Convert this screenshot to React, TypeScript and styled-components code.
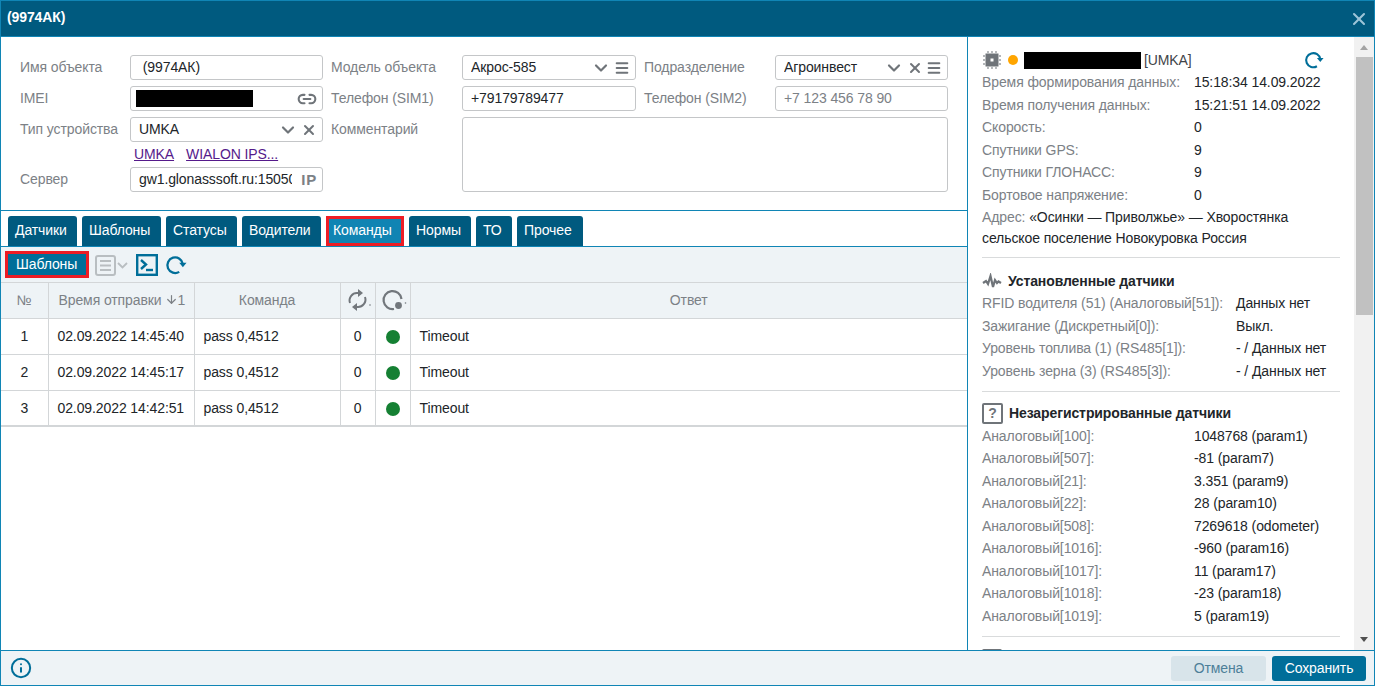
import React from 'react'
import styled, {createGlobalStyle} from 'styled-components'
import {ArrowDown, ChevronDown, Info, Link2, Menu, X} from 'lucide-react'

const GlobalStyle = createGlobalStyle`
  html, body {
    margin: 0;
    height: 687px;
    overflow: hidden;
    background: #fff;
    font-family: "Liberation Sans", Arial, sans-serif;
    font-size: 14px;
    letter-spacing: -0.1px;
    color: #212529;
  }
`

const Modal = styled.div`
  box-sizing: border-box;
  height: 686px;
  display: flex;
  flex-direction: column;
  border: 1px solid #1085b5;
`

const Header = styled.div`
  flex: none;
  height: 35px;
  display: flex;
  align-items: center;
  justify-content: space-between;
  padding: 0 5px 0 6px;
  background: #005a7f;
  border-bottom: 1px solid #1085b5;
  color: #fff;
  font-weight: bold;

  svg {
    color: #9cc4d8;
  }
`

const Title = styled.span`
  padding-bottom: 3px;
`

const Body = styled.div`
  flex: 1;
  min-height: 0;
  display: flex;
`

const LeftPanel = styled.div`
  flex: none;
  width: 966px;
  display: flex;
  flex-direction: column;
  border-right: 1px solid #1085b5;
`

const Form = styled.div`
  flex: none;
  box-sizing: border-box;
  height: 174px;
  padding: 18px 0 0 19px;
  border-bottom: 1px solid #1085b5;
  display: grid;
  grid-template-columns: 110px 193px 139px 174px 139px 173px;
  grid-template-rows: 25px 25px 25px 13px 25px;
  row-gap: 6px;
  align-content: start;
`

const Label = styled.div<{$indent?: boolean}>`
  line-height: 25px;
  color: #7c8186;
  white-space: nowrap;
  padding-left: ${(p) => (p.$indent ? '8px' : '0')};
`

const ServerLabel = styled(Label)`
  grid-column: 1;
  grid-row: 5;
`

const Field = styled.div<{$tight?: boolean}>`
  box-sizing: border-box;
  height: 25px;
  display: flex;
  align-items: center;
  gap: 3px;
  padding: 0 5px 0 ${(p) => (p.$tight ? '5px' : '8px')};
  background: #fff;
  border: 1px solid #c4c6c8;
  border-radius: 3px;
  color: #6f7479;
`

const ServerField = styled(Field)`
  grid-column: 2;
  grid-row: 5;
`

const FieldValue = styled.span<{$muted?: boolean}>`
  flex: 1;
  min-width: 0;
  overflow: hidden;
  white-space: nowrap;
  padding-bottom: 1px;
  color: ${(p) => (p.$muted ? '#7c8186' : '#212529')};
`

const Redacted = styled.span<{$width: number; $height: number}>`
  display: block;
  flex: none;
  width: ${(p) => p.$width}px;
  height: ${(p) => p.$height}px;
  background: #000;
`

const IpMark = styled.span`
  flex: none;
  margin-left: 6px;
  font-weight: bold;
  font-size: 15px;
  letter-spacing: 0.8px;
  color: #7c8186;
`

const Links = styled.div`
  grid-column: 2;
  grid-row: 4;
  display: flex;
  gap: 12px;
  padding-left: 4px;
  line-height: 13px;
  white-space: nowrap;

  a {
    color: #551a8b;
  }
`

const Comment = styled.div`
  grid-column: 4 / 7;
  grid-row: 3 / 6;
  border: 1px solid #c4c6c8;
  border-radius: 3px;
`

const Tabs = styled.div`
  flex: none;
  display: flex;
  gap: 5px;
  height: 30px;
  padding: 5px 0 0 7px;
  border-bottom: 1px solid #1085b5;
`

const Tab = styled.div<{$active?: boolean; $width: number}>`
  box-sizing: border-box;
  width: ${(p) => p.$width}px;
  height: 30px;
  line-height: ${(p) => (p.$active ? '23px' : '29px')};
  padding-left: ${(p) => (p.$active ? '4px' : '7px')};
  color: #fff;
  white-space: nowrap;
  background: ${(p) => (p.$active ? '#1084b3' : '#005a7f')};
  border: ${(p) => (p.$active ? '3px solid #ed1c24' : 'none')};
  border-radius: ${(p) => (p.$active ? '0' : '3px 3px 0 0')};
`

const Toolbar = styled.div`
  flex: none;
  height: 35px;
  display: flex;
  align-items: center;
  padding-left: 4px;
  background: #eef3f6;
  border-bottom: 1px solid #d3d6d8;
`

const TemplateButton = styled.div`
  box-sizing: border-box;
  width: 84px;
  height: 27px;
  line-height: 21px;
  padding-left: 8px;
  margin-right: 6px;
  color: #fff;
  background: #006e99;
  border: 3px solid #ed1c24;
`

const ToolIcon = styled.svg`
  flex: none;
  display: block;
`

const InlineIcon = styled(ToolIcon)`
  display: inline-block;
  vertical-align: middle;
`

const ToolGap = styled.span<{$width: number}>`
  flex: none;
  width: ${(p) => p.$width}px;
`

const Table = styled.table`
  width: 966px;
  table-layout: fixed;
  border-collapse: collapse;
  border-bottom: 2px solid #d3d6d8;
`

const Th = styled.th<{$align?: string}>`
  box-sizing: border-box;
  height: 35px;
  padding: 0 0 1px;
  font-weight: normal;
  color: #7c8186;
  text-align: ${(p) => p.$align || 'center'};
  background: #eef3f6;
  border-right: 1px solid #d3d6d8;
  border-bottom: 1px solid #d3d6d8;

  &:last-child {
    border-right: none;
  }
`

const IconTh = styled(Th)`
  padding: 0 0 0 2px;
`

const SortHead = styled.span`
  display: flex;
  align-items: center;
  padding-left: 10px;
  white-space: nowrap;

  svg {
    margin-left: 3px;
  }
`

const Td = styled.td<{$center?: boolean}>`
  box-sizing: border-box;
  height: 36px;
  padding: 0 ${(p) => (p.$center ? '0' : '9px')};
  text-align: ${(p) => (p.$center ? 'center' : 'left')};
  white-space: nowrap;
  border-right: 1px solid #d3d6d8;
  border-bottom: 1px solid #d3d6d8;

  &:last-child {
    border-right: none;
  }
`

const StatusDot = styled.span`
  display: inline-block;
  vertical-align: middle;
  width: 14px;
  height: 14px;
  border-radius: 50%;
  background: #158033;
`

const RightPanel = styled.div`
  flex: 1;
  min-width: 0;
  display: flex;
`

const InfoPane = styled.div`
  flex: 1;
  min-width: 0;
  overflow: hidden;
  padding: 12px 14px 0;
`

const InfoHeader = styled.div`
  height: 22px;
  display: flex;
  align-items: center;
  color: #3f4448;
`

const OnlineDot = styled.span`
  width: 10px;
  height: 10px;
  margin: 0 6px;
  border-radius: 50%;
  background: #ffa500;
`

const DeviceType = styled.span`
  margin-left: 3px;
  flex: 1;
`

const RefreshSlot = styled.span`
  margin-right: 16px;
`

const Row = styled.div<{$col: number}>`
  display: grid;
  grid-template-columns: ${(p) => p.$col}px 1fr;
  line-height: 22.5px;
  white-space: nowrap;
`

const Key = styled.span`
  color: #7c8186;
`

const Address = styled.div`
  margin-top: 1px;
  line-height: 21px;
`

const Divider = styled.div<{$top: number}>`
  height: 1px;
  margin-top: ${(p) => p.$top}px;
  background: #d9dbdc;
`

const SectionTitle = styled.div<{$top: number; $bottom?: number}>`
  height: 22px;
  margin: ${(p) => p.$top}px 0 ${(p) => p.$bottom ?? 0}px;
  display: flex;
  align-items: center;
  gap: 6px;
  font-weight: bold;
  color: #212529;
`

const QuestionBox = styled.span`
  box-sizing: border-box;
  width: 21px;
  height: 21px;
  display: flex;
  align-items: center;
  justify-content: center;
  border: 2px solid #6f7479;
  border-radius: 2px;
  color: #6f7479;
  font-size: 14px;
  font-weight: bold;
`

const ClippedBox = styled.div`
  box-sizing: border-box;
  width: 20px;
  height: 20px;
  margin-top: 12px;
  border: 2px solid #6f7479;
  border-radius: 2px;
`

const Scrollbar = styled.div`
  flex: none;
  width: 20px;
  display: flex;
  flex-direction: column;
  align-items: center;
  background: #f1f1f1;
`

const ScrollArrow = styled.div<{$down?: boolean}>`
  flex: none;
  height: 20px;
  padding-bottom: ${(p) => (p.$down ? '2px' : '0')};
  box-sizing: border-box;
  display: flex;
  align-items: center;
  justify-content: center;

  &::before {
    content: '';
    border-left: 4px solid transparent;
    border-right: 4px solid transparent;
    ${(p) => (p.$down ? 'border-top: 5px solid #505050;' : 'border-bottom: 5px solid #a3a3a3;')}
  }
`

const ScrollThumb = styled.div`
  width: 17px;
  height: 258px;
  background: #c1c1c1;
`

const ScrollSpace = styled.div`
  flex: 1;
`

const Footer = styled.div`
  flex: none;
  height: 34px;
  display: flex;
  align-items: center;
  justify-content: space-between;
  padding: 0 8px 0 9px;
  background: #eef3f6;
  border-top: 1px solid #1085b5;
  color: #006e99;
`

const FooterActions = styled.div`
  display: flex;
  gap: 6px;
`

const FooterButton = styled.div<{$primary?: boolean}>`
  width: ${(p) => (p.$primary ? '94px' : '95px')};
  height: 25px;
  line-height: 25px;
  text-align: center;
  border-radius: 3px;
  color: ${(p) => (p.$primary ? '#fff' : '#4d7f99')};
  background: ${(p) => (p.$primary ? '#006e99' : '#d8e4ea')};
`

const RefreshIcon = ({color, size = 22}: {color: string; size?: number}) => (
  <ToolIcon width={size} height={size} viewBox="0 0 24 24" fill="none">
    <path d="M15.5 19.5A8.5 8.5 0 1 1 19.5 11" stroke={color} strokeWidth="2.5" />
    <path d="M15.5 9.5h8L19.5 14.5z" fill={color} />
  </ToolIcon>
)

const ListIcon = () => (
  <ToolIcon width="33" height="22" viewBox="0 0 33 22" fill="none" stroke="#b9bec1">
    <rect x="1" y="2" width="19" height="19" rx="2" strokeWidth="2" />
    <path d="M5 7h11M5 11.500h11M5 16h11" strokeWidth="2" />
    <path d="M23 9l4.500 4.500L32 9" strokeWidth="1.800" />
  </ToolIcon>
)

const TerminalIcon = () => (
  <ToolIcon width="22" height="22" viewBox="0 0 22 22" fill="none" stroke="#006e99">
    <rect x="1.200" y="1.200" width="19.600" height="19.600" strokeWidth="2.400" />
    <path d="M5 6l5 4.500L5 15" strokeWidth="2.400" />
    <path d="M10 16h7" strokeWidth="2.400" />
  </ToolIcon>
)

const RepeatIcon = () => (
  <InlineIcon width="26" height="24" viewBox="0 0 26 24" fill="none">
    <path d="M4 15A7.500 7.500 0 0 1 12 5h2" stroke="#72777c" strokeWidth="2" />
    <path d="M12 1l5 4-5 4z" fill="#72777c" />
    <path d="M19 9a7.500 7.500 0 0 1-8 10H9" stroke="#72777c" strokeWidth="2" />
    <path d="M11 15l-5 4 5 4z" fill="#72777c" />
    <circle cx="24" cy="17" r="0.800" fill="#72777c" />
  </InlineIcon>
)

const SentIcon = () => (
  <InlineIcon width="26" height="24" viewBox="0 0 26 24" fill="none">
    <path d="M13 21A9 9 0 1 1 20.500 11" stroke="#72777c" strokeWidth="2.200" />
    <circle cx="17.500" cy="17.500" r="3.400" fill="#72777c" />
    <circle cx="24.500" cy="15" r="0.800" fill="#72777c" />
  </InlineIcon>
)

const ChipIcon = () => (
  <ToolIcon width="20" height="20" viewBox="0 0 20 20" fill="none">
    <rect x="3.500" y="3.500" width="13" height="13" fill="#6f7479" />
    <rect x="8.500" y="8.500" width="3" height="3" fill="#fff" />
    <path d="M6 1v2M10 1v2M14 1v2M6 17v2M10 17v2M14 17v2M1 6h2M1 10h2M1 14h2M17 6h2M17 10h2M17 14h2" stroke="#9a9ea2" strokeWidth="1.400" />
  </ToolIcon>
)

const PulseIcon = () => (
  <ToolIcon width="20" height="16" viewBox="0 0 20 16" fill="none">
    <path d="M1 10l3-2 2 3 2.500-8L11 14l2-7 2 3 1.500-1.500L19 10" stroke="#6f7479" strokeWidth="2.200" />
  </ToolIcon>
)

const commands = [
  {n: 1, time: '02.09.2022 14:45:40'},
  {n: 2, time: '02.09.2022 14:45:17'},
  {n: 3, time: '02.09.2022 14:42:51'},
]

const general = [
  ['Время формирования данных:', '15:18:34 14.09.2022'],
  ['Время получения данных:', '15:21:51 14.09.2022'],
  ['Скорость:', '0'],
  ['Спутники GPS:', '9'],
  ['Спутники ГЛОНАСС:', '9'],
  ['Бортовое напряжение:', '0'],
]

const installed = [
  ['RFID водителя (51) (Аналоговый[51]):', 'Данных нет'],
  ['Зажигание (Дискретный[0]):', 'Выкл.'],
  ['Уровень топлива (1) (RS485[1]):', '- / Данных нет'],
  ['Уровень зерна (3) (RS485[3]):', '- / Данных нет'],
]

const unregistered = [
  ['Аналоговый[100]:', '1048768 (param1)'],
  ['Аналоговый[507]:', '-81 (param7)'],
  ['Аналоговый[21]:', '3.351 (param9)'],
  ['Аналоговый[22]:', '28 (param10)'],
  ['Аналоговый[508]:', '7269618 (odometer)'],
  ['Аналоговый[1016]:', '-960 (param16)'],
  ['Аналоговый[1017]:', '11 (param17)'],
  ['Аналоговый[1018]:', '-23 (param18)'],
  ['Аналоговый[1019]:', '5 (param19)'],
]

const tabs = [
  {name: 'Датчики', width: 69},
  {name: 'Шаблоны', width: 79},
  {name: 'Статусы', width: 71},
  {name: 'Водители', width: 79},
  {name: 'Команды', width: 78},
  {name: 'Нормы', width: 62},
  {name: 'ТО', width: 36},
  {name: 'Прочее', width: 66},
]

const Rows = ({items, col}: {items: string[][]; col: number}) => (
  <>
    {items.map(([k, v]) => (
      <Row key={k} $col={col}>
        <Key>{k}</Key>
        <span>{v}</span>
      </Row>
    ))}
  </>
)

export default function App() {
  return (
    <>
      <GlobalStyle />
      <Modal>
        <Header>
          <Title>(9974АК)</Title>
          <X size={20} strokeWidth={2.5} />
        </Header>
        <Body>
          <LeftPanel>
            <Form>
              <Label>Имя объекта</Label>
              <Field><FieldValue>{'\u00A0(9974АК)'}</FieldValue></Field>
              <Label $indent>Модель объекта</Label>
              <Field>
                <FieldValue>Акрос-585</FieldValue>
                <ChevronDown size={20} strokeWidth={2.6} />
                <Menu size={16} strokeWidth={3} />
              </Field>
              <Label $indent>Подразделение</Label>
              <Field>
                <FieldValue>Агроинвест</FieldValue>
                <ChevronDown size={20} strokeWidth={2.6} />
                <X size={16} strokeWidth={3} />
                <Menu size={16} strokeWidth={3} />
              </Field>

              <Label>IMEI</Label>
              <Field $tight>
                <Redacted $width={117} $height={17} />
                <FieldValue />
                <Link2 size={20} strokeWidth={2.5} />
              </Field>
              <Label $indent>Телефон (SIM1)</Label>
              <Field><FieldValue>+79179789477</FieldValue></Field>
              <Label $indent>Телефон (SIM2)</Label>
              <Field><FieldValue $muted>+7 123 456 78 90</FieldValue></Field>

              <Label>Тип устройства</Label>
              <Field>
                <FieldValue>UMKA</FieldValue>
                <ChevronDown size={20} strokeWidth={2.6} />
                <X size={16} strokeWidth={3} />
              </Field>
              <Label $indent>Комментарий</Label>
              <Comment />

              <Links>
                <a href="#umka">UMKA</a>
                <a href="#wialon">WIALON IPS...</a>
              </Links>

              <ServerLabel>Сервер</ServerLabel>
              <ServerField>
                <FieldValue>gw1.glonasssoft.ru:15050</FieldValue>
                <IpMark>IP</IpMark>
              </ServerField>
            </Form>

            <Tabs>
              {tabs.map((t) => (
                <Tab key={t.name} $width={t.width} $active={t.name === 'Команды'}>{t.name}</Tab>
              ))}
            </Tabs>

            <Toolbar>
              <TemplateButton>Шаблоны</TemplateButton>
              <ListIcon />
              <ToolGap $width={8} />
              <TerminalIcon />
              <ToolGap $width={7} />
              <RefreshIcon color="#006e99" />
            </Toolbar>

            <Table>
              <colgroup>
                <col style={{width: 47}} />
                <col style={{width: 146}} />
                <col style={{width: 146}} />
                <col style={{width: 35}} />
                <col style={{width: 35}} />
                <col />
              </colgroup>
              <thead>
                <tr>
                  <Th>№</Th>
                  <Th $align="left">
                    <SortHead>Время отправки <ArrowDown size={13} strokeWidth={2.2} />1</SortHead>
                  </Th>
                  <Th>Команда</Th>
                  <IconTh><RepeatIcon /></IconTh>
                  <IconTh><SentIcon /></IconTh>
                  <Th>Ответ</Th>
                </tr>
              </thead>
              <tbody>
                {commands.map((c) => (
                  <tr key={c.n}>
                    <Td $center>{c.n}</Td>
                    <Td>{c.time}</Td>
                    <Td>pass 0,4512</Td>
                    <Td $center>0</Td>
                    <Td $center><StatusDot /></Td>
                    <Td>Timeout</Td>
                  </tr>
                ))}
              </tbody>
            </Table>
          </LeftPanel>

          <RightPanel>
            <InfoPane>
              <InfoHeader>
                <ChipIcon />
                <OnlineDot />
                <Redacted $width={117} $height={17} />
                <DeviceType>[UMKA]</DeviceType>
                <RefreshSlot><RefreshIcon color="#006e99" size={20} /></RefreshSlot>
              </InfoHeader>
              <Rows items={general} col={212} />
              <Address>
                <Key>Адрес:</Key>{' '}«Осинки — Приволжье» — Хворостянка сельское поселение Новокуровка Россия
              </Address>
              <Divider $top={8} />
              <SectionTitle $top={12}>
                <PulseIcon />
                Установленные датчики
              </SectionTitle>
              <Rows items={installed} col={254} />
              <Divider $top={9} />
              <SectionTitle $top={10} $bottom={0.75}>
                <QuestionBox>?</QuestionBox>
                Незарегистрированные датчики
              </SectionTitle>
              <Rows items={unregistered} col={212} />
              <Divider $top={8.5} />
              <ClippedBox />
            </InfoPane>
            <Scrollbar>
              <ScrollArrow />
              <ScrollThumb />
              <ScrollSpace />
              <ScrollArrow $down />
            </Scrollbar>
          </RightPanel>
        </Body>
        <Footer>
          <Info size={22} strokeWidth={2.2} />
          <FooterActions>
            <FooterButton>Отмена</FooterButton>
            <FooterButton $primary>Сохранить</FooterButton>
          </FooterActions>
        </Footer>
      </Modal>
    </>
  )
}
